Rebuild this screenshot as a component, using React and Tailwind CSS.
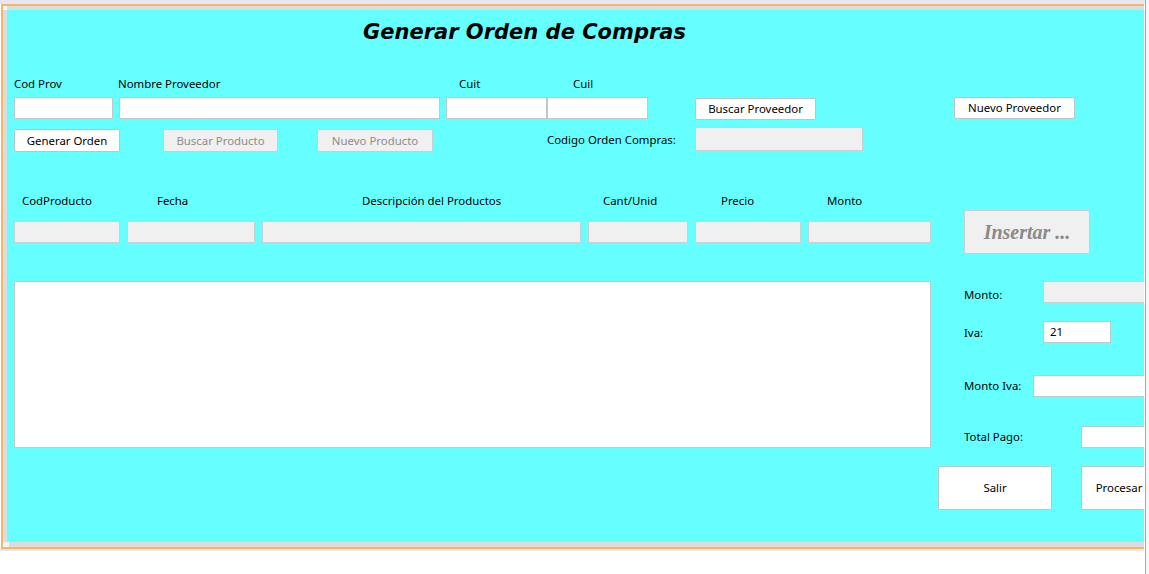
import React from 'react'

const txt = "font-['Noto_Sans','DejaVu_Sans',sans-serif] text-[11.4px] text-black"

function Input({ w, h = 22, disabled, value, className = '' }) {
  return (
    <div
      className={`shrink-0 border flex items-center px-[6px] ${
        disabled ? 'bg-[#f0f0f0] border-[#c6d2d2]' : 'bg-white border-[#bccaca]'
      } ${className}`}
      style={{ width: w, height: h }}
    >
      {value}
    </div>
  )
}

function Button({ w, h = 23, disabled, children, className = '' }) {
  return (
    <div
      className={`shrink-0 flex items-center justify-center rounded-[2px] border ${
        disabled ? 'bg-[#f0f0f0] border-[#c8cfcf] text-[#8c8c8c]' : 'bg-white border-[#b9c6c6] text-black'
      } ${className}`}
      style={{ width: w, height: h }}
    >
      {children}
    </div>
  )
}

export default function App() {
  return (
    <div className={`w-[1149px] h-[574px] bg-white flex overflow-hidden ${txt}`}>
      <div className="w-[1146px] h-full shrink-0 border-r border-[#a8a8a8] flex flex-col">
        <div className="h-[4px] bg-[#e6e6f6]" />
        <div className="relative w-[1143px] ml-[1px] border-t-2 border-l-2 border-b-2 border-[#f2b866] bg-[#dcdcdc] pt-[4px] pl-[4px] pb-[5px]">
          <div className="absolute left-0 top-0 w-[4px] h-[4px] bg-white" />
          <div className="absolute left-0 bottom-0 w-[6px] h-[5px] bg-[#f4f4f4]" />
          <div className="h-[532px] bg-[#66ffff] overflow-hidden flex flex-col">
            {/* title */}
            <div className="mt-[10px] h-[24px] leading-[24px] pl-[356px] font-['DejaVu_Sans',sans-serif] font-bold italic text-[21px] whitespace-nowrap">
              Generar Orden de Compras
            </div>

            {/* proveedor labels */}
            <div className="mt-[32px] h-[16px] leading-[16px] pl-[7px] flex whitespace-nowrap">
              <span className="w-[104px] shrink-0">Cod Prov</span>
              <span className="w-[341px] shrink-0">Nombre Proveedor</span>
              <span className="w-[114px] shrink-0">Cuit</span>
              <span>Cuil</span>
            </div>

            {/* proveedor inputs */}
            <div className="mt-[5px] pl-[7px] flex items-start">
              <Input w={99} />
              <Input w={321} className="ml-[6px]" />
              <Input w={101} className="ml-[6px]" />
              <Input w={101} />
              <Button w={121} h={22} className="ml-[47px] mt-[1px]">Buscar Proveedor</Button>
              <Button w={121} h={22} className="ml-[138px]">Nuevo Proveedor</Button>
            </div>

            {/* action buttons */}
            <div className="mt-[7px] h-[25px] pl-[7px] flex items-start whitespace-nowrap">
              <Button w={106} className="mt-[2px]">Generar Orden</Button>
              <Button w={115} disabled className="ml-[43px] mt-[2px]">Buscar Producto</Button>
              <Button w={116} disabled className="ml-[39px] mt-[2px]">Nuevo Producto</Button>
              <span className="ml-[114px] w-[148px] shrink-0 mt-[5px] leading-[16px]">Codigo Orden Compras:</span>
              <Input w={168} h={24} disabled />
            </div>

            {/* product labels */}
            <div className="mt-[41px] h-[16px] leading-[16px] pl-[15px] flex whitespace-nowrap">
              <span className="w-[135px] shrink-0">CodProducto</span>
              <span className="w-[205px] shrink-0">Fecha</span>
              <span className="w-[241px] shrink-0">Descripción del Productos</span>
              <span className="w-[118px] shrink-0">Cant/Unid</span>
              <span className="w-[106px] shrink-0">Precio</span>
              <span>Monto</span>
            </div>

            {/* product inputs */}
            <div className="mt-[1px] pl-[7px] flex items-start">
              <Input w={106} disabled className="mt-[11px]" />
              <Input w={128} disabled className="ml-[7px] mt-[11px]" />
              <Input w={319} disabled className="ml-[7px] mt-[11px]" />
              <Input w={100} disabled className="ml-[7px] mt-[11px]" />
              <Input w={106} disabled className="ml-[7px] mt-[11px]" />
              <Input w={123} disabled className="ml-[7px] mt-[11px]" />
              <Button w={126} h={44} disabled className="ml-[33px]">
                <span className="font-['Liberation_Serif',serif] font-bold italic text-[20px] text-[#8a8a8a]">
                  Insertar ...
                </span>
              </Button>
            </div>

            {/* list + totals */}
            <div className="mt-[27px] pl-[7px] flex items-start">
              <div className="w-[917px] h-[167px] shrink-0 bg-white border border-[#bccaca]" />
              <div className="ml-[33px] flex flex-col shrink-0 whitespace-nowrap">
                <div className="h-[22px] flex items-center">
                  <span className="w-[79px] shrink-0 mt-[6px]">Monto:</span>
                  <Input w={110} disabled />
                </div>
                <div className="mt-[18px] h-[22px] flex items-center">
                  <span className="w-[79px] shrink-0 mt-[2px]">Iva:</span>
                  <Input w={68} value="21" />
                </div>
                <div className="mt-[32px] h-[22px] flex items-center">
                  <span className="w-[69px] shrink-0">Monto Iva:</span>
                  <Input w={120} />
                </div>
                <div className="mt-[29px] h-[22px] flex items-center">
                  <span className="w-[117px] shrink-0">Total Pago:</span>
                  <Input w={80} />
                </div>
              </div>
            </div>

            {/* bottom buttons */}
            <div className="mt-[18px] pl-[931px] flex">
              <Button w={114} h={44}>Salir</Button>
              <Button w={76} h={44} className="ml-[29px]">Procesar</Button>
            </div>
          </div>
        </div>
        <div className="h-[2px] w-[1144px] bg-[#e6e6f6]" />
      </div>
      <div className="flex-1 bg-[#f7f7f7]" />
    </div>
  )
}
